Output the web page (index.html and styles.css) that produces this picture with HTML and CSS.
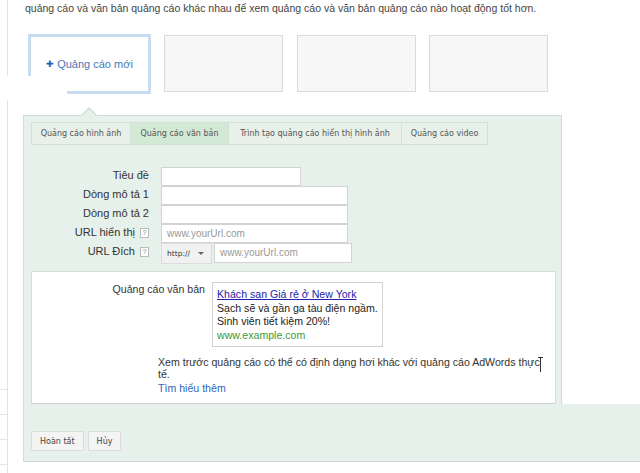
FILE: index.html
```html
<!DOCTYPE html>
<html lang="vi">
<head>
<meta charset="utf-8">
<title>Quảng cáo mới</title>
<link rel="stylesheet" href="styles.css">
</head>
<body>
<div class="page">
  <div class="sidebar">
    <div class="side-space"></div>
    <div class="side-item"></div>
    <div class="side-item"></div>
    <div class="side-item"></div>
    <div class="side-item"></div>
  </div>
  <div class="main">
    <p class="intro">quảng cáo và văn bản quảng cáo khác nhau để xem quảng cáo và văn bản quảng cáo nào hoạt động tốt hơn.</p>
    <div class="slots">
      <div class="slot slot-new"><span class="plus">✚</span> Quảng cáo mới</div>
      <div class="slot slot-a"></div>
      <div class="slot slot-b"></div>
      <div class="slot slot-c"></div>
    </div>
    <div class="panel">
      <div class="panel-main">
        <div class="tabs">
          <div class="tab t1">Quảng cáo hình ảnh</div>
          <div class="tab t2 active">Quảng cáo văn bản</div>
          <div class="tab t3">Trình tạo quảng cáo hiển thị hình ảnh</div>
          <div class="tab t4">Quảng cáo video</div>
        </div>
        <div class="form">
          <div class="label">Tiêu đề</div>
          <div class="field"><div class="input w140"></div></div>
          <div class="label">Dòng mô tả 1</div>
          <div class="field"><div class="input w187"></div></div>
          <div class="label">Dòng mô tả 2</div>
          <div class="field"><div class="input w187"></div></div>
          <div class="label">URL hiển thị <span class="help">?</span></div>
          <div class="field"><div class="input w187 ph">www.yourUrl.com</div></div>
          <div class="label">URL Đích <span class="help">?</span></div>
          <div class="field">
            <div class="select">http:// <span class="caret"></span></div>
            <div class="input w138 ph">www.yourUrl.com</div>
          </div>
        </div>
        <div class="preview">
          <div class="pv-row">
            <div class="pv-label">Quảng cáo văn bản</div>
            <div class="ad">
              <a class="ad-title">Khách san Giá rẻ ở New York</a>
              <div>Sạch sẽ và gần ga tàu điện ngầm.</div>
              <div>Sinh viên tiết kiệm 20%!</div>
              <div class="ad-url">www.example.com</div>
            </div>
          </div>
          <div class="note">
            <p>Xem trước quảng cáo có thể có định dạng hơi khác với quảng cáo AdWords thực tế.</p>
            <a class="more">Tìm hiểu thêm</a>
            <span class="ibeam"></span>
          </div>
        </div>
      </div>
      <div class="panel-foot">
        <button class="btn">Hoàn tất</button>
        <button class="btn">Hủy</button>
      </div>
    </div>
  </div>
</div>
<div class="mask"></div>
</body>
</html>
```

FILE: styles.css
```css
html, body {
  margin: 0;
  padding: 0;
  background: #fff;
}
body {
  font-family: "Liberation Sans", Arial, sans-serif;
  font-size: 11px;
  color: #444;
  width: 640px;
  height: 473px;
  overflow: hidden;
  position: relative;
}
.page {
  display: flex;
  min-height: 473px;
}
.sidebar {
  width: 7px;
  border-right: 1px solid #e2e2e2;
  display: flex;
  flex-direction: column;
}
.side-space {
  height: 389px;
}
.side-item {
  height: 24px;
  border-top: 1px solid #e6e6e6;
}
.main {
  flex: 1;
  padding-left: 15px;
  min-width: 0;
}
.intro {
  margin: 0;
  padding: 1px 0 0 2px;
  line-height: 14px;
  font-size: 10.5px;
  color: #444;
  white-space: nowrap;
}
.slots {
  display: flex;
  align-items: center;
  margin: 18px 0 0 5px;
  height: 61px;
}
.slot {
  box-sizing: border-box;
  background: #f7f7f7;
  border: 1px solid #dadada;
  height: 57px;
}
.slot-new {
  width: 123px;
  height: 60px;
  background: #fff;
  border: 3px solid #c7dcf1;
  display: flex;
  align-items: center;
  justify-content: center;
  color: #4a77b4;
  font-size: 11px;
  margin-right: 13px;
}
.plus {
  color: #1d5fb0;
  font-size: 9px;
  margin-right: 3px;
}
.slot-a { width: 119px; margin-right: 14px; }
.slot-b { width: 119px; margin-right: 13px; }
.slot-c { width: 119px; }

.panel {
  margin-top: 21px;
  position: relative;
}
.panel-main {
  width: 539px;
  box-sizing: border-box;
  background: #e5f1ea;
  border: 1px solid #cfdfd5;
  border-bottom: none;
  padding: 6px 5px 0 7px;
  position: relative;
}
.panel-main::before,
.panel-main::after {
  content: "";
  position: absolute;
  left: 57px;
  width: 0;
  height: 0;
  border-left: 8px solid transparent;
  border-right: 8px solid transparent;
}
.panel-main::before {
  top: -9px;
  border-bottom: 8px solid #cfdfd5;
}
.panel-main::after {
  top: -7px;
  border-bottom: 8px solid #e5f1ea;
}
.tabs {
  display: flex;
  font-family: "DejaVu Sans", Verdana, sans-serif;
  font-size: 8px;
  color: #555;
}
.tab {
  height: 23px;
  box-sizing: border-box;
  line-height: 21px;
  text-align: center;
  white-space: nowrap;
  background: #e8f0ea;
  border: 1px solid #d2e1d6;
  border-left: none;
}
.tab.t1 { width: 100px; border-left: 1px solid #d2e1d6; }
.tab.t2 { width: 98px; }
.tab.t3 { width: 173px; }
.tab.t4 { width: 86px; }
.tab.active {
  background: #d2e9d5;
}
.form {
  display: grid;
  grid-template-columns: 118px 1fr;
  column-gap: 12px;
  margin-top: 22px;
}
.label {
  text-align: right;
  height: 19px;
  line-height: 17px;
  color: #333;
  font-size: 11px;
}
.field {
  height: 19px;
  display: flex;
  align-items: flex-start;
}
.field:last-child {
  height: 21px;
}
.input {
  box-sizing: border-box;
  height: 19px;
  background: #fff;
  border: 1px solid #d3d3d3;
  padding-left: 5px;
  line-height: 17px;
  font-size: 10px;
}
.ph {
  color: #999;
}
.w140 { width: 140px; }
.w187 { width: 187px; }
.w138 { width: 138px; margin-left: 2px; height: 20px; line-height: 18px; }
.help {
  display: inline-block;
  width: 7px;
  height: 8px;
  border: 1px solid #bbb;
  font-size: 7px;
  line-height: 8px;
  text-align: center;
  color: #888;
  vertical-align: 1px;
  margin-left: 2px;
  background: #fff;
}
.select {
  box-sizing: border-box;
  width: 51px;
  height: 21px;
  background: #f1f1f1;
  border: 1px solid #dcdcdc;
  font-family: "DejaVu Sans", Verdana, sans-serif;
  font-size: 7.5px;
  color: #333;
  line-height: 19px;
  padding-left: 5px;
  display: flex;
  align-items: center;
}
.caret {
  width: 0;
  height: 0;
  border-left: 3px solid transparent;
  border-right: 3px solid transparent;
  border-top: 3px solid #666;
  margin-left: 8px;
}
.preview {
  margin-top: 7px;
  background: #fff;
  border: 1px solid #d6dcd8;
  border-bottom-color: #cfcfcf;
  height: 133px;
  box-sizing: border-box;
  position: relative;
  font-size: 10.6px;
}
.pv-row {
  display: flex;
  align-items: flex-start;
  padding-top: 10px;
}
.pv-label {
  width: 173px;
  text-align: right;
  color: #333;
  margin-right: 7px;
  line-height: 13px;
  padding-top: 1px;
}
.ad {
  width: 171px;
  height: 65px;
  box-sizing: border-box;
  border: 1px solid #d0d0d0;
  padding: 5px 0 0 4px;
  line-height: 13.5px;
  color: #222;
  white-space: nowrap;
}
.ad-title {
  color: #2222aa;
  text-decoration: underline;
  display: block;
}
.ad-url {
  color: #3a9a3a;
}
.note {
  margin: 9px 0 0 126px;
  width: 388px;
  line-height: 12px;
  color: #333;
  position: relative;
}
.note p {
  margin: 0;
}
.more {
  display: block;
  color: #3366bb;
  margin-top: 2px;
  line-height: 12px;
}
.ibeam {
  position: absolute;
  left: 382px;
  top: 1px;
  width: 1px;
  height: 15px;
  background: #333;
}
.ibeam::before {
  content: "";
  position: absolute;
  left: -2px;
  top: 0;
  width: 5px;
  height: 1px;
  background: #333;
}
.panel-foot {
  background: #e5f1ea;
  border-left: 1px solid #cfdfd5;
  border-bottom: 1px solid #cfd6d2;
  height: 58px;
  box-sizing: border-box;
  padding: 27px 0 0 7px;
  display: flex;
  gap: 4px;
  align-items: flex-start;
}
.btn {
  font-family: "DejaVu Sans", Verdana, sans-serif;
  font-size: 8px;
  color: #444;
  background: #f4f4f4;
  border: 1px solid #dcdcdc;
  border-radius: 1px;
  height: 20px;
  padding: 0 8px;
  margin: 0;
}
.mask {
  position: absolute;
  left: 0;
  top: 76px;
  width: 67px;
  height: 24px;
  background: #fff;
}
```
